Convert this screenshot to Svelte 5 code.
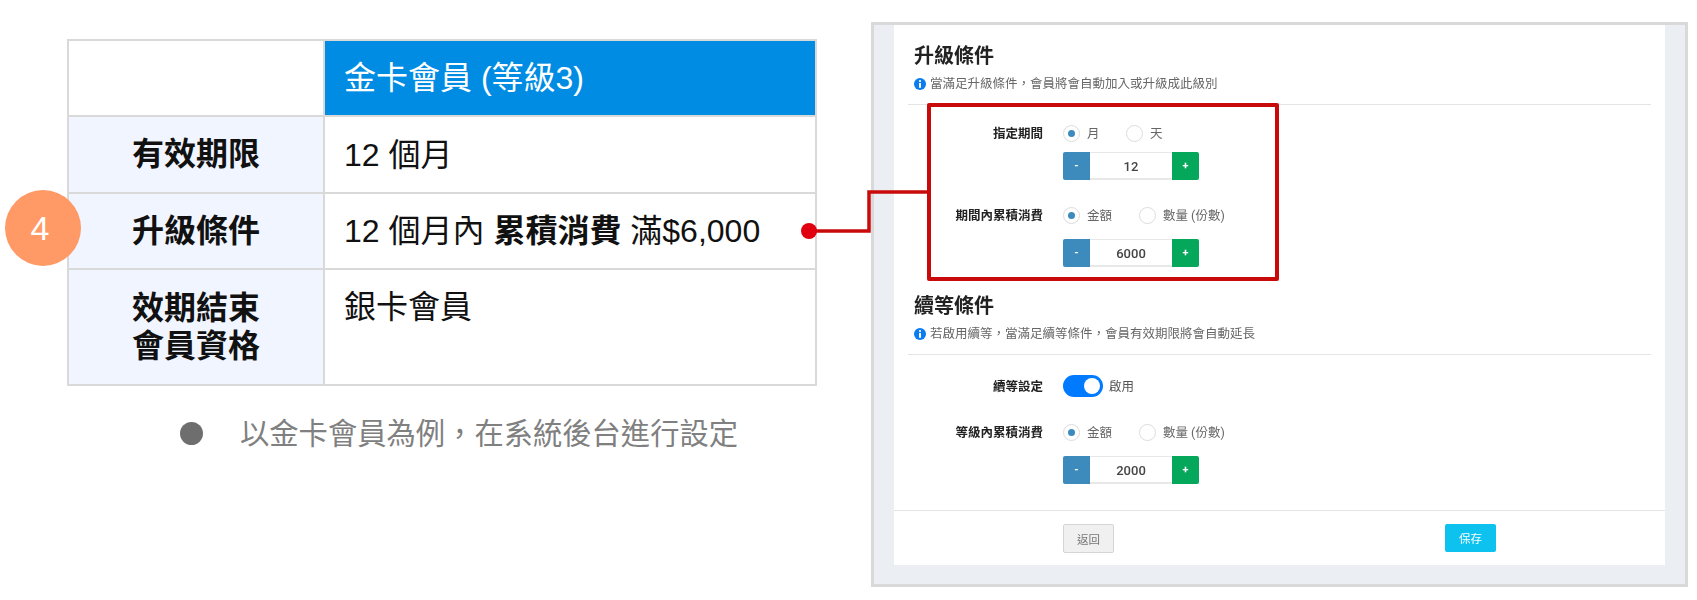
<script>
  const rows = [
    { id: 'period', label: ['有效期限'], value: '12 個月' },
    { id: 'upgrade', label: ['升級條件'] },
    { id: 'expiry', label: ['效期結束', '會員資格'], value: '銀卡會員' }
  ];
</script>

{#snippet info()}
  <svg class="info" viewBox="0 0 12 12" aria-hidden="true">
    <circle cx="6" cy="6" r="6" fill="#0b7bf0" />
    <circle cx="6" cy="3" r="1.1" fill="#fff" />
    <rect x="5" y="4.9" width="2" height="4.9" fill="#fff" />
  </svg>
{/snippet}

{#snippet radio(text, checked, gap)}
  <span class="radio" style={gap ? `width:${gap}px` : ''}>
    <i class:checked></i><span>{text}</span>
  </span>
{/snippet}

{#snippet stepper(value, tight)}
  <div class="stepper" class:tight>
    <span class="minus">-</span>
    <span class="num">{value}</span>
    <span class="plus">+</span>
  </div>
{/snippet}

<main class="page">
  <section class="left" lang="zh-Hant">
    <table>
      <colgroup>
        <col class="c1" />
        <col />
      </colgroup>
      <thead>
        <tr>
          <th></th>
          <th class="gold">金卡會員 (等級3)</th>
        </tr>
      </thead>
      <tbody>
        {#each rows as row}
          <tr class={row.id}>
            <th class="name">
              {#each row.label as line}<div>{line}</div>{/each}
            </th>
            <td>
              {#if row.value}
                {row.value}
              {:else}
                12 個月內 <b>累積消費</b> 滿$6,000
              {/if}
            </td>
          </tr>
        {/each}
      </tbody>
    </table>
    <span class="step">4</span>
    <p class="caption"><i></i>以金卡會員為例，在系統後台進行設定</p>
  </section>

  <section class="panel">
    <div class="sheet">
      <div class="body">
        <h2>升級條件</h2>
        <p class="note">{@render info()}當滿足升級條件，會員將會自動加入或升級成此級別</p>
        <hr />
        <div class="row first">
          <label>指定期間</label>
          {@render radio('月', true, 63)}
          {@render radio('天', false)}
        </div>
        {@render stepper('12', true)}
        <div class="row">
          <label>期間內累積消費</label>
          {@render radio('金額', true, 76)}
          {@render radio('數量 (份數)', false)}
        </div>
        {@render stepper('6000')}

        <h2 class="second">續等條件</h2>
        <p class="note">{@render info()}若啟用續等，當滿足續等條件，會員有效期限將會自動延長</p>
        <hr />
        <div class="row switch-row">
          <label>續等設定</label>
          <span class="switch"><i></i></span>
          <span class="switch-text">啟用</span>
        </div>
        <div class="row">
          <label>等級內累積消費</label>
          {@render radio('金額', true, 76)}
          {@render radio('數量 (份數)', false)}
        </div>
        {@render stepper('2000')}
      </div>
      <footer>
        <button class="back">返回</button>
        <button class="save">保存</button>
      </footer>
    </div>
    <div class="highlight"></div>
  </section>

  <svg class="connector" width="140" height="60" viewBox="0 0 140 60" aria-hidden="true">
    <path d="M15 47H75V8H135" fill="none" stroke="#c80a0a" stroke-width="3.5" />
    <circle cx="15" cy="47" r="8" fill="#e0000f" />
  </svg>
</main>

<style>
  :global(body) {
    margin: 0;
    background: #fff;
  }

  .page {
    position: relative;
    display: flex;
    align-items: flex-start;
    width: 1697px;
    height: 600px;
    overflow: hidden;
    font-family: "Liberation Sans", "Noto Sans CJK TC", sans-serif;
  }

  .left {
    position: relative;
    width: 750px;
    margin: 39px 0 0 67px;
  }

  table {
    width: 750px;
    table-layout: fixed;
    border-collapse: collapse;
    font-size: 32px;
    color: #111;
  }

  .c1 {
    width: 256px;
  }

  th,
  td {
    border: 2px solid #d9d9d9;
    padding: 0 0 0 19px;
    text-align: left;
    font-weight: 400;
    line-height: 38px;
  }

  thead tr {
    height: 76px;
  }

  .gold {
    background: #008ce3;
    color: #fff;
  }

  .name {
    background: #f0f5ff;
    padding: 0;
    text-align: center;
    font-weight: 700;
    line-height: 38.5px;
  }

  .period {
    height: 77px;
  }

  .upgrade {
    height: 76px;
  }

  .expiry {
    height: 116px;
  }

  .expiry td {
    vertical-align: top;
    padding-top: 18px;
  }

  b {
    font-weight: 700;
  }

  .step {
    position: absolute;
    left: -62px;
    top: 151px;
    box-sizing: border-box;
    width: 76px;
    height: 76px;
    padding-right: 6px;
    border-radius: 50%;
    background: #ff9966;
    color: #fff;
    font-size: 34px;
    line-height: 76px;
    text-align: center;
  }

  .caption {
    display: flex;
    align-items: center;
    gap: 37px;
    margin: 36px 0 0 113px;
    font-size: 29.3px;
    line-height: 23px;
    color: #808080;
    white-space: nowrap;
  }

  .caption i {
    width: 23px;
    height: 23px;
    border-radius: 50%;
    background: #6e6e6e;
  }

  .panel {
    position: relative;
    box-sizing: border-box;
    width: 817px;
    height: 565px;
    margin: 22px 0 0 54px;
    padding: 0 20px 19px;
    border: 3px solid #d9d9d9;
    background: #ebeef3;
    font-family: Roboto, "Noto Sans CJK TC", sans-serif;
    filter: blur(0.35px);
  }

  .sheet {
    height: 100%;
    background: #fff;
    display: flex;
    flex-direction: column;
  }

  .body {
    flex: 1;
    padding: 17px 14px 0;
  }

  h2 {
    margin: 0 0 0 6px;
    font-size: 20px;
    line-height: 28px;
    font-weight: 700;
    color: #222;
  }

  h2.second {
    margin-top: 25px;
  }

  .note {
    display: flex;
    align-items: center;
    gap: 4px;
    margin: 5px 0 0 6px;
    font-size: 12.5px;
    line-height: 18px;
    color: #666;
  }

  .info {
    width: 12px;
    height: 12px;
    flex: none;
  }

  hr {
    margin: 11px 0 0;
    border: 0;
    border-top: 1px solid #e4e4e4;
  }

  .row {
    display: flex;
    align-items: center;
    height: 20px;
    margin-top: 25px;
  }

  .row.first {
    margin-top: 18px;
  }

  .row.switch-row {
    height: 22px;
    margin-top: 20px;
  }

  label {
    width: 135px;
    margin-right: 20px;
    padding-bottom: 2px;
    text-align: right;
    font-size: 12.5px;
    font-weight: 700;
    color: #222;
  }

  .radio {
    display: flex;
    align-items: center;
    gap: 7px;
    font-size: 12.5px;
    color: #666;
    white-space: nowrap;
  }

  .radio span {
    padding-bottom: 2px;
  }

  .radio i {
    box-sizing: border-box;
    width: 17px;
    height: 17px;
    border: 1px solid #dcdcdc;
    border-radius: 50%;
    background: #fff;
    display: flex;
    align-items: center;
    justify-content: center;
  }

  .radio i.checked::after {
    content: "";
    width: 7px;
    height: 7px;
    border-radius: 50%;
    background: #3d8bbd;
  }

  .stepper {
    display: flex;
    width: 136px;
    height: 28px;
    margin: 14px 0 0 155px;
    font-weight: 500;
    font-size: 13px;
    line-height: 27px;
    text-align: center;
  }

  .stepper.tight {
    margin-top: 9px;
  }

  .minus,
  .plus {
    width: 27px;
    color: #fff;
    font-size: 11px;
    font-weight: 700;
  }

  .minus {
    background: #3d8bbd;
    border-radius: 2px 0 0 2px;
  }

  .plus {
    background: #05a75b;
    border-radius: 0 2px 2px 0;
  }

  .num {
    flex: 1;
    box-sizing: border-box;
    border: solid #e8e8e8;
    border-width: 1px 0 2px;
    color: #444;
  }

  .switch {
    box-sizing: border-box;
    width: 40px;
    height: 22px;
    padding: 3px 3px 3px 21px;
    border-radius: 11px;
    background: #007bff;
  }

  .switch i {
    display: block;
    width: 16px;
    height: 16px;
    border-radius: 50%;
    background: #fff;
  }

  .switch-text {
    margin-left: 6px;
    padding-bottom: 2px;
    font-size: 12.5px;
    color: #555;
  }

  footer {
    display: flex;
    height: 55px;
    box-sizing: border-box;
    padding: 13px 0 0 169px;
    border-top: 1px solid #e4e4e4;
  }

  button {
    box-sizing: border-box;
    width: 51px;
    height: 28px;
    padding: 0;
    border-radius: 2px;
    font-family: inherit;
    font-size: 11.5px;
  }

  .back {
    height: 29px;
    border: 1px solid #d5d5d5;
    background: #f0f0f0;
    color: #777;
  }

  .save {
    margin-left: 331px;
    border: 0;
    background: #0dc2ee;
    color: #fff;
  }

  .highlight {
    position: absolute;
    left: 53px;
    top: 78px;
    box-sizing: border-box;
    width: 352px;
    height: 178px;
    border: 4px solid #c80a0a;
    border-radius: 2px;
  }

  .connector {
    position: absolute;
    left: 794px;
    top: 184px;
  }
</style>
